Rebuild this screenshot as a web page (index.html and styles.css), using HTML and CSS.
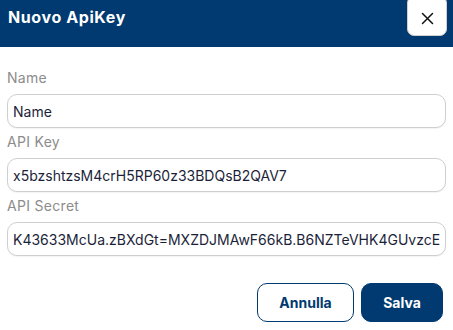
FILE: index.html
```html
<!DOCTYPE html>
<html>
<head>
<meta charset="utf-8">
<link rel="stylesheet" href="styles.css">
</head>
<body>
<div class="dialog">
  <header class="header">
    <h1 class="title">Nuovo ApiKey</h1>
    <button class="close" aria-label="Chiudi">
      <svg width="13" height="13" viewBox="0 0 13 13"><path d="M1.5 1.5 L11.5 11.5 M11.5 1.5 L1.5 11.5" stroke="#111" stroke-width="1.5" stroke-linecap="round"/></svg>
    </button>
  </header>
  <form class="form">
    <label class="label">Name</label>
    <input class="input" type="text" value="Name">
    <label class="label">API Key</label>
    <input class="input" type="text" value="x5bzshtzsM4crH5RP60z33BDQsB2QAV7">
    <label class="label">API Secret</label>
    <input class="input" type="text" value="K43633McUa.zBXdGt=MXZDJMAwF66kB.B6NZTeVHK4GUvzcEvE">
    <div class="actions">
      <button type="button" class="btn btn-outline">Annulla</button>
      <button type="button" class="btn btn-primary">Salva</button>
    </div>
  </form>
</div>
</body>
</html>
```
FILE: styles.css
```css
* { box-sizing: border-box; }
html, body { margin: 0; padding: 0; background: #fff; }
body { font-family: Inter, "Noto Sans", sans-serif; width: 453px; height: 330px; overflow: hidden; }
.header {
  height: 47px;
  background: #003a70;
  display: flex;
  align-items: flex-start;
  justify-content: space-between;
  padding: 0 6px 0 8px;
}
.title {
  margin: 8px 0 0;
  color: #fff;
  font-size: 16px;
  font-weight: 700;
  line-height: 19px;
  letter-spacing: 0.6px;
}
.close {
  margin-top: -4px;
  width: 40px;
  height: 40px;
  border-radius: 7px;
  background: #fff;
  border: 1px solid #d0d0d0;
  display: flex;
  align-items: center;
  justify-content: center;
  padding: 0;
  padding-top: 4px;
}
.form {
  display: flex;
  flex-direction: column;
  padding: 21px 7px 0 7px;
}
.label {
  font-size: 14px;
  line-height: 20px;
  color: #8c8c8c;
  letter-spacing: 0.3px;
  margin-bottom: 6px;
}
.input + .label { margin-top: 4px; }
.input {
  height: 34px;
  border: 1px solid #cfcfcf;
  border-radius: 10px;
  padding: 0 5px;
  font-family: inherit;
  font-size: 14px;
  color: #1c1f3a;
  outline: none;
  box-shadow: 0 1px 1px rgba(0,0,0,0.05);
}
.actions {
  display: flex;
  justify-content: flex-end;
  gap: 7px;
  margin-top: 27px;
  padding-right: 3px;
}
.btn {
  height: 39px;
  border-radius: 10px;
  font-family: inherit;
  font-size: 14px;
  font-weight: 700;
  padding: 0;
}
.btn-outline {
  width: 97px;
  background: #fff;
  color: #003a70;
  border: 1px solid #003a70;
}
.btn-primary {
  width: 82px;
  background: #003a70;
  color: #fff;
  border: 1px solid #003a70;
}
```
